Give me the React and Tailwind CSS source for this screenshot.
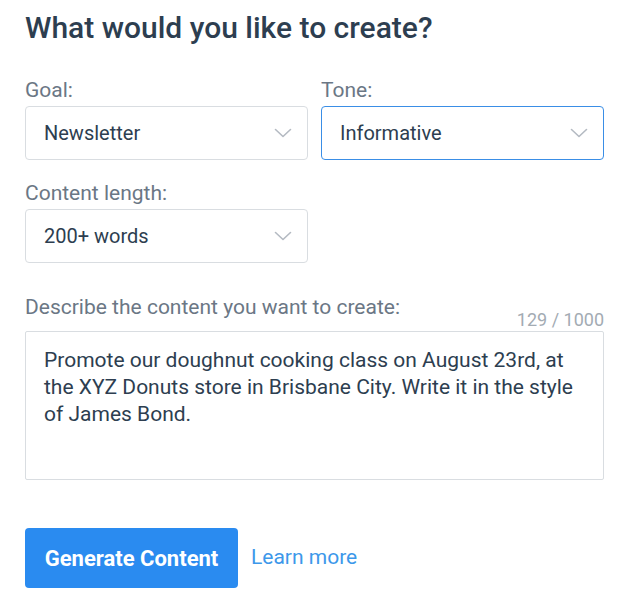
import React from 'react';

const Chevron = () => (
  <svg width="18" height="10" viewBox="0 0 18 10" fill="none" className="shrink-0">
    <path d="M1.5 1.5 L9 8.5 L16.5 1.5" stroke="#b4bac2" strokeWidth="1.6" strokeLinecap="round" strokeLinejoin="round" />
  </svg>
);

const Select = ({ value, focused }) => (
  <div
    className={`flex items-center justify-between h-[54px] pl-[18px] pr-[15px] rounded-[4px] bg-white border ${
      focused ? 'border-[#3a8ee6]' : 'border-[#d9dde1]'
    }`}
  >
    <span className="text-[20px] text-[#2d3e50]">{value}</span>
    <Chevron />
  </div>
);

const Label = ({ children }) => (
  <div className="text-[21px] leading-[24px] text-[#6b7785] mb-[4px]">{children}</div>
);

export default function App() {
  return (
    <div className="bg-white min-h-[607px] px-[25px] pt-[10px] font-['Roboto',sans-serif]">
      <h1 className="text-[30px] leading-[36px] font-medium text-[#2d3e50]">What would you like to create?</h1>

      <div className="grid grid-cols-2 gap-x-[13px] mt-[32px]">
        <div>
          <Label>Goal:</Label>
          <Select value="Newsletter" />
        </div>
        <div>
          <Label>Tone:</Label>
          <Select value="Informative" focused />
        </div>
        <div className="mt-[21px]">
          <Label>Content length:</Label>
          <Select value="200+ words" />
        </div>
      </div>

      <div className="mt-[32px]">
        <div className="text-[21px] leading-[24px] text-[#6b7785]">Describe the content you want to create:</div>
        <div className="text-right text-[18px] leading-[20px] text-[#a3abb3] -mt-[9px] mb-[1px]">129 / 1000</div>
        <div className="h-[149px] border border-[#d9dde1] rounded-[2px] pl-[18px] pr-[18px] pt-[15px] text-[21px] leading-[27px] text-[#2d3e50]">
          Promote our doughnut cooking class on August 23rd, at the XYZ Donuts store in Brisbane City. Write it in the style of James Bond.
        </div>
      </div>

      <div className="flex items-center mt-[48px]">
        <button className="h-[60px] w-[213px] rounded-[4px] bg-[#2a8bf0] text-white text-[22px] font-bold">
          Generate Content
        </button>
        <a className="ml-[13px] text-[21px] text-[#3d98ea]">Learn more</a>
      </div>
    </div>
  );
}
